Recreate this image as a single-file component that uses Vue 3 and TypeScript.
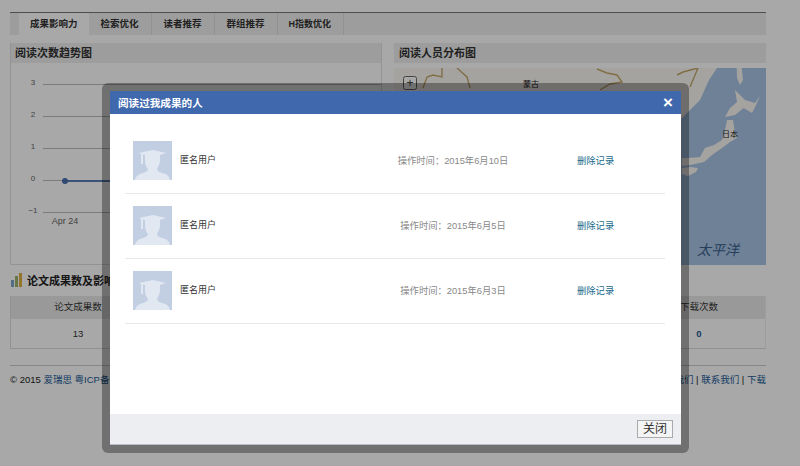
<template>
	<div class="page">
		<div class="tabs">
			<a
				v-for="(tab, i) in tabs"
				:key="tab"
				class="tab"
				:class="{ active: i === 0 }"
				>{{ tab }}</a
			>
		</div>

		<div class="panels">
			<section class="panel">
				<h3 class="panel-title">阅读次数趋势图</h3>
				<svg class="chart" width="370" height="201" viewBox="0 0 370 201">
					<g v-for="tick in ticks" :key="tick.label">
						<line :x1="32" :x2="370" :y1="tick.y" :y2="tick.y" stroke="#bcbcbc" />
						<text x="22" :y="tick.y" class="tick">{{ tick.label }}</text>
					</g>
					<text x="54" y="161" class="tick-x">Apr 24</text>
					<line x1="54" y1="118" x2="120" y2="118" stroke="#5b7fb8" stroke-width="2" />
					<circle cx="54" cy="118" r="3" fill="#4a6fae" />
				</svg>
			</section>

			<section class="panel panel-map">
				<h3 class="panel-title">阅读人员分布图</h3>
				<svg class="map" width="372" height="197" viewBox="12 0 372 197">
					<rect x="0" y="0" width="384" height="197" fill="#a7c4e6" />
					<polygon points="0,0 335,0 327,12 318,32 305,45 290,60 280,70 0,70" fill="#fbf8f3" />
					<polygon points="354.7,0 359.7,0 361,12 358,17 355,10" fill="#fbf8f3" />
					<polygon
						points="353,22 363,32 373,35 378,28 373,39 370,45 361.7,40 353,47 343,49 348,40 355,34"
						fill="#fbf8f3"
					/>
					<polygon
						points="345,52 351,52 353,64 355,70 348,74 340,80 330,87 322,94 308,97 300,98 300,90 306,90 318,89 323,80 332,77 340,72 343,62"
						fill="#fbf8f3"
					/>
					<polygon points="308,99 316,100 314,104 306,108 300,106 300,100" fill="#fbf8f3" />
					<g fill="none" stroke="#c4a86a" stroke-width="1.4">
						<polyline points="41,20 45,9 51,7 60,9 60,0" />
						<polyline points="75,0 85,9 88,20" />
						<polyline points="215,1 225,5 235,7 240,14 228,16 218,22" />
						<polyline points="295,7 301,4 316,0 308,19" />
					</g>
					<rect x="21.5" y="8.5" width="13" height="13" rx="2" fill="#fff" stroke="#666" />
					<text x="28" y="19" class="zoom-plus">+</text>
					<text x="149" y="19" class="map-label">蒙古</text>
					<text x="348" y="69" class="map-label">日本</text>
					<text x="336" y="187" class="map-sea">太平洋</text>
				</svg>
			</section>
		</div>

		<h3 class="stat-title">
			<svg width="13" height="14" viewBox="0 0 13 14">
				<rect x="1" y="7" width="3" height="7" fill="#7fa8c9" />
				<rect x="5" y="3" width="3" height="11" fill="#9cb56a" />
				<rect x="9" y="0" width="3" height="14" fill="#e0b040" />
			</svg>
			论文成果数及影响力
		</h3>

		<div class="stats">
			<div class="th">论文成果数</div>
			<div class="th"></div>
			<div class="th">下载次数</div>
			<div class="td">13</div>
			<div class="td"></div>
			<div class="td link-num">0</div>
		</div>

		<footer class="site-footer">
			<span>© 2015 <a>爱瑞思</a> <a>粤ICP备</a></span>
			<span class="footer-links"><a>关于我们</a> | <a>联系我们</a> | <a>下载</a></span>
		</footer>

		<div class="overlay"></div>

		<div class="modal">
			<div class="modal-head">
				<span>阅读过我成果的人</span>
				<span class="modal-close">×</span>
			</div>
			<div class="modal-body">
				<div v-for="item in readers" :key="item.time" class="reader">
					<div class="reader-user">
						<svg class="avatar" width="39" height="39" viewBox="0 0 39 39">
							<rect width="39" height="39" fill="#c2cfe3" />
							<path
								d="M6 12 L20 9 L33 12 L27 14 L27 19 C27 23 25 26 24 28 C24 30 26 31 29 32 C34 33 36 35 37 39 L2 39 C3 35 6 33 10 32 C13 31 15 30 15 28 C13 26 12 23 12 19 L12 14 L10 13.5 L10 23 L8 23 L8 13 Z"
								fill="#e2e8f2"
							/>
						</svg>
						<span class="reader-name">匿名用户</span>
					</div>
					<div class="reader-time">操作时间：{{ item.time }}</div>
					<a class="reader-del">删除记录</a>
				</div>
			</div>
			<div class="modal-foot">
				<button class="btn-close" type="button">关闭</button>
			</div>
		</div>
	</div>
</template>

<script setup lang="ts">
interface Reader {
	time: string;
}

const tabs: string[] = ['成果影响力', '检索优化', '读者推荐', '群组推荐', 'H指数优化'];

const ticks = [
	{ label: '3', y: 21.5 },
	{ label: '2', y: 53.5 },
	{ label: '1', y: 85.5 },
	{ label: '0', y: 117.5 },
	{ label: '−1', y: 149.5 },
];

const readers: Reader[] = [
	{ time: '2015年6月10日' },
	{ time: '2015年6月5日' },
	{ time: '2015年6月3日' },
];
</script>

<style>
html,
body {
	margin: 0;
	background: #fff;
}
</style>

<style scoped>
.page {
	position: relative;
	width: 800px;
	height: 466px;
	box-sizing: border-box;
	padding: 12px 34px 0 10px;
	overflow: hidden;
	font-family: 'Liberation Sans', 'Noto Sans CJK SC', sans-serif;
	color: #333;
	background: #fff;
}

a {
	color: #1a5a96;
}

.tabs {
	display: flex;
	height: 23px;
	box-sizing: border-box;
	padding-left: 9px;
	background: #eee;
	border-top: 1px solid #777;
}

.tab {
	padding: 0 12px;
	font-size: 9.5px;
	font-weight: 700;
	line-height: 22px;
	color: #333;
	border-right: 1px solid #ddd;
}

.tab.active {
	padding: 0 11px;
	background: #fff;
	border-right: 0;
}

.tab:last-child {
	padding: 0 12px 0 11px;
	font-size: 9px;
}

.panels {
	display: grid;
	grid-template-columns: 372px 372px;
	column-gap: 12px;
	margin-top: 8px;
}

.panel {
	height: 222px;
	box-sizing: border-box;
	border-left: 1px solid #e0e0e0;
	border-right: 1px solid #e0e0e0;
	border-bottom: 1px solid #e0e0e0;
}

.panel-map {
	border: 0;
}

.panel-map .panel-title {
	padding-left: 5px;
}

.panel-title {
	height: 20px;
	margin: 0;
	padding-left: 4px;
	font-size: 11px;
	font-weight: 700;
	line-height: 20px;
	background: #eee;
}

.chart,
.map {
	display: block;
}

.map {
	margin-top: 5px;
}

.tick {
	font-size: 8px;
	fill: #666;
	text-anchor: middle;
}

.tick-x {
	font-size: 9px;
	fill: #666;
	text-anchor: middle;
}

.zoom-plus {
	font-size: 12px;
	fill: #444;
	text-anchor: middle;
}

.map-label {
	font-size: 8px;
	fill: #222;
	text-anchor: middle;
}

.map-sea {
	font-size: 14px;
	font-style: italic;
	fill: #3a5f8a;
	text-anchor: middle;
}

.stat-title {
	display: flex;
	align-items: center;
	gap: 4px;
	height: 14px;
	margin: 8px 0 0;
	font-size: 11px;
	font-weight: 700;
	color: #222;
}

.stats {
	display: grid;
	grid-template-columns: 134px 1fr 132px;
	grid-template-rows: 23px 29px;
	margin-top: 9px;
	border-left: 1px solid #ddd;
	border-right: 1px solid #eee;
	border-bottom: 1px solid #ddd;
}

.th,
.td {
	font-size: 9.5px;
	text-align: center;
}

.th {
	line-height: 21px;
	background: #e9e9e9;
}

.td {
	line-height: 29px;
}

.link-num {
	font-weight: 700;
	color: #1a5a96;
}

.site-footer {
	display: flex;
	justify-content: space-between;
	margin-top: 16px;
	padding-top: 8px;
	font-size: 9.5px;
	line-height: 12px;
	color: #222;
	border-top: 1px solid #ccc;
}

.overlay {
	position: absolute;
	inset: 0;
	background: rgba(0, 0, 0, 0.34);
}

.modal {
	position: absolute;
	top: 83px;
	left: 102px;
	display: flex;
	flex-direction: column;
	width: 587px;
	height: 370px;
	box-sizing: border-box;
	background: #fff;
	background-clip: padding-box;
	border: 8px solid rgba(0, 0, 0, 0.33);
	border-radius: 6px;
}

.modal-head {
	display: flex;
	align-items: center;
	justify-content: space-between;
	height: 23px;
	flex: none;
	padding: 0 8px;
	font-size: 10.6px;
	font-weight: 700;
	color: #fff;
	background: #3f68ad;
}

.modal-close {
	font-size: 17px;
	line-height: 20px;
}

.modal-body {
	flex: 1;
	padding: 15px 16px 0 15px;
}

.reader {
	display: grid;
	grid-template-columns: 210px 220px auto;
	align-items: center;
	height: 65px;
	box-sizing: border-box;
	padding: 0 0 1px 8px;
	border-bottom: 1px solid #e8e8e8;
}

.reader-user {
	display: flex;
	align-items: center;
	gap: 8px;
}

.avatar {
	display: block;
}

.reader-name {
	margin-bottom: 2px;
	font-size: 9px;
	color: #333;
}

.reader-time {
	margin-bottom: 1px;
	font-size: 9.3px;
	color: #888;
	text-align: center;
}

.reader-del {
	margin-bottom: 1px;
	padding-left: 14px;
	font-size: 9.3px;
	color: #1b6a8c;
}

.modal-foot {
	display: flex;
	align-items: center;
	justify-content: flex-end;
	flex: none;
	height: 31px;
	padding-right: 8px;
	box-sizing: border-box;
	background: #eceef2;
	border-bottom: 1px solid #b9bccb;
}

.btn-close {
	width: 36px;
	height: 18px;
	padding: 0;
	font-family: inherit;
	font-size: 12px;
	line-height: 16px;
	color: #333;
	background: #f4f4f4;
	border: 1px solid #aaa;
}
</style>
